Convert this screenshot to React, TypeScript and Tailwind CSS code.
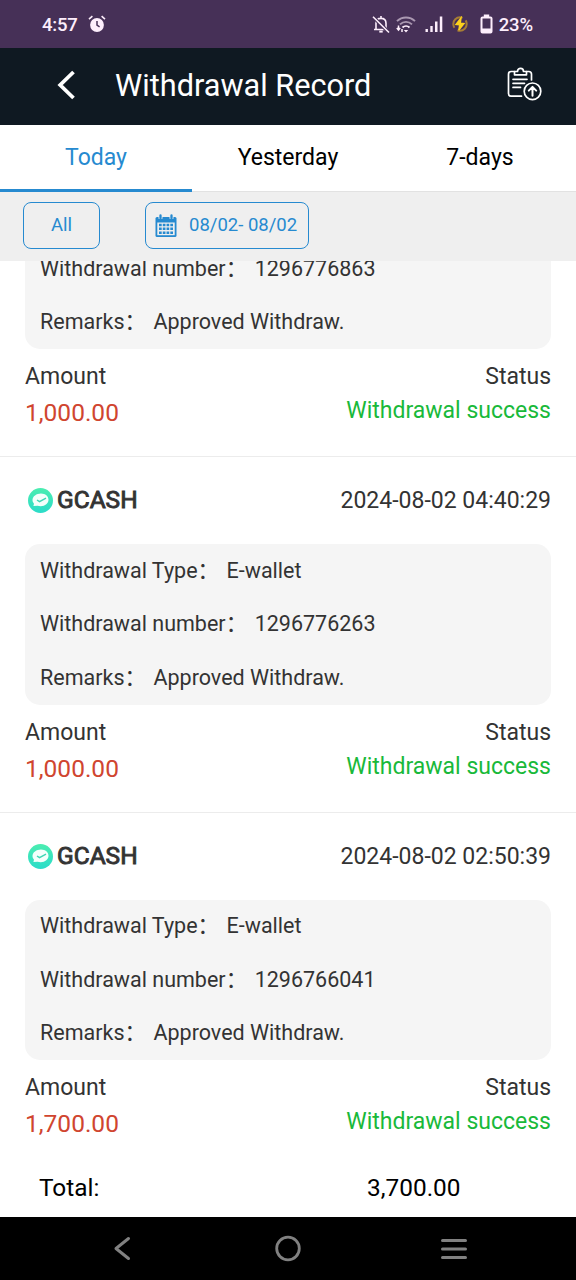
const records = [
	{
		id: "1296776863",
		amount: "1,000.00",
	},
	{
		id: "1296776263",
		date: "2024-08-02 04:40:29",
		amount: "1,000.00",
	},
	{
		id: "1296766041",
		date: "2024-08-02 02:50:39",
		amount: "1,700.00",
	},
];

function StatusBar() {
	return (
		<div className="flex items-center justify-between h-12 shrink-0 pl-[42px] pr-[43px] bg-[#463057] text-[#fdeefc]">
			<div className="flex items-center gap-[10px]">
				<span className="text-[18.5px] font-medium leading-6 -tracking-[0.2px] pt-px">4:57</span>
				<svg width="18" height="18" viewBox="0 0 18 18" fill="none">
					<circle cx="9" cy="10" r="6.9" fill="currentColor" />
					<path d="M1 4.2 4.4 1.2M17 4.2 13.6 1.2" stroke="currentColor" strokeWidth="1.6" />
					<path d="M9 6v4.2l2.6 1.6" stroke="#463057" strokeWidth="1.5" />
				</svg>
			</div>
			<div className="flex items-center">
				<svg width="18" height="19" viewBox="0 0 18 19" fill="none" stroke="currentColor" strokeWidth="1.6">
					<path d="M4 14V8.2C4 5.3 6 3.4 9 3.4s5 1.9 5 4.8V14M2 14.5h13.5M9 1v2.5" />
					<path d="M7.3 16.6h3.4" strokeWidth="2" />
					<path d="M1 1.8 17 17.5" stroke="#463057" strokeWidth="3.6" />
					<path d="M1 1.8 17 17.5" />
				</svg>
				<svg className="ml-[6px]" width="20" height="17" viewBox="0 0 20 17" fill="none" stroke="currentColor">
					<g strokeWidth="1.9" opacity="0.55">
						<path d="M1 5.2C6 .2 14 .2 19 5.2" />
						<path d="M4 8.4c3.5-3.3 8.5-3.3 12 0" />
					</g>
					<path d="M6.5 11.5c2-1.9 5-1.9 7 0" strokeWidth="1.9" />
					<path d="M10 16.5 7.8 14h4.4z" fill="currentColor" stroke="none" />
					<path d="M2.5 9.5v4.5M0.8 12l1.7 2 1.7-2M6 16v-3" strokeWidth="1.5" />
				</svg>
				<svg className="ml-[9px]" width="18" height="17" viewBox="0 0 18 17" fill="currentColor">
					<rect x="0.5" y="13" width="2.4" height="3" />
					<rect x="5.3" y="10" width="2.4" height="6" />
					<rect x="10" y="5.5" width="2.5" height="10.5" />
					<rect x="14.8" y="0.5" width="2.5" height="15.5" />
				</svg>
				<svg className="ml-[9px]" width="16" height="16" viewBox="0 0 16 16" fill="none">
					<circle cx="8" cy="8" r="6.7" stroke="#a67d35" strokeWidth="2" strokeDasharray="17 4" strokeDashoffset="4" />
					<path d="M9 2 4 8.5l3.7.3L6.8 14 12 7.5l-3.7-.4z" fill="#fdd21c" stroke="#fdd21c" strokeWidth="1.4" />
				</svg>
				<svg className="ml-[12px]" width="13" height="20" viewBox="0 0 13 20" fill="none">
					<path d="M3.8 0.5h5.4v2.5h-5.4z" fill="currentColor" />
					<rect x="1.5" y="3.5" width="10" height="15" rx="1" stroke="currentColor" strokeWidth="2" />
					<path d="M2 14.5h9v4h-9z" fill="currentColor" />
				</svg>
				<span className="ml-[6px] pt-px text-[18.5px] font-medium leading-6 -tracking-[0.1px]">23%</span>
			</div>
		</div>
	);
}

function Header() {
	return (
		<div className="flex items-center h-[77px] shrink-0 pl-[57px] pr-[34px] bg-[#0f1922] text-white">
			<svg className="mb-[3px]" width="18" height="30" viewBox="0 0 18 30" fill="none" stroke="currentColor" strokeWidth="3.8">
				<path d="M16.5 2 3.2 15l13.3 13" />
			</svg>
			<h1 className="ml-[40px] text-[30.7px] leading-9 -mt-px">Withdrawal Record</h1>
			<svg className="ml-auto mb-[6px]" width="35" height="34" viewBox="0 0 35 34" fill="none" stroke="currentColor" strokeWidth="1.7" strokeLinecap="round" strokeLinejoin="round">
				<path d="M7.5 4.5H4.2Q1.5 4.5 1.5 7.2V26.5Q1.5 29.2 4.2 29.2H14.5M19.5 4.5h2.3q2.7 0 2.7 2.7V13" />
				<path d="M7.5 7.8V4.5h3c0-4.2 6-4.2 6 0h3v3.3z" />
				<path d="M6 12.3h14M6 16.3h11.5M6 20.4h7.5" />
				<circle cx="25.5" cy="24.3" r="8.3" />
				<path d="M25.5 28.8v-8.5M21.8 23.6l3.7-3.7 3.7 3.7" strokeWidth="2" />
			</svg>
		</div>
	);
}

function CalendarIcon() {
	return (
		<svg width="22" height="24" viewBox="0 0 22 24">
			<path d="M2 3h18q1.500 0 1.500 1.500v17q0 1.500-1.500 1.500H2q-1.500 0-1.500-1.500V4.500q0-1.500 1.500-1.500z" fill="#268ad0" />
			<path d="M2.3 8.5h17.4v12.700H2.300z" fill="#efefef" />
			<path d="M5.5 0v4.800M16.500 0v4.800" stroke="#efefef" strokeWidth="4" />
			<path d="M5.5 1.500v2.500M16.500 1.500v2.500" stroke="#268ad0" strokeWidth="2.3" strokeLinecap="round" />
			<path
				d="M4 11h14M4 14.800h14M4 18.700h14"
				stroke="#268ad0"
				strokeWidth="2.5"
				strokeDasharray="2.7 1.07"
			/>
		</svg>
	);
}

function Row({ label, value }: { label: string; value: string }) {
	return (
		<div className="flex items-center h-[53.5px] text-[21.5px]">
			<span>{label}：</span>
			<span className="ml-[7.5px]">{value}</span>
		</div>
	);
}

// a record without a date is the one scrolled half under the filter bar
function Record({ id, date, amount }: { id: string; date?: string; amount: string }) {
	return (
		<div className="shrink-0 px-[25px] border-b border-[#ececec] last:border-b-0">
			{date && (
				<div className="flex items-center h-[87px]">
					<svg className="ml-[3px]" width="25" height="25" viewBox="0 0 25 25">
						<defs>
							<linearGradient id={`g${id}`} x1="0" y1="0" x2="0" y2="1">
								<stop offset="0" stopColor="#4bedb0" />
								<stop offset="1" stopColor="#2bdcc9" />
							</linearGradient>
						</defs>
						<circle cx="12.5" cy="12.5" r="12.5" fill={`url(#g${id})`} />
						<path d="M13 5.5c4.4 0 7.5 2.8 7.5 6.3s-3.3 6.4-7.8 6.4c-1.2 0-2.2-.1-3.1-.4l-4.2.2.6-2.3c-1-1.1-1.5-2.3-1.5-3.7 0-3.600 4-6.500 8.500-6.500z" fill="#f4fffb" />
						<path d="M9 12l2.5 1.7 6.5-3.5" fill="none" stroke="#3ed6b4" strokeWidth="1.4" />
					</svg>
					<span className="ml-[4px] text-[24.5px] [-webkit-text-stroke:0.9px_#333]">GCASH</span>
					<span className="ml-auto pt-[2px] text-[23px]">{date}</span>
				</div>
			)}
			<div className="pl-[15px] rounded-[15px] bg-[#f5f5f5]">
				{date && <Row label="Withdrawal Type" value="E-wallet" />}
				<Row label="Withdrawal number" value={id} />
				<Row label="Remarks" value="Approved Withdraw." />
			</div>
			<div className="flex justify-between h-[107px] pt-[10px] text-[23px] leading-[36px]">
				<div>
					<div>Amount</div>
					<div className="text-[24.5px] text-[#d0452f]">{amount}</div>
				</div>
				<div className="text-right">
					<div>Status</div>
					<div className="-mt-[2px] text-[#19b93a]">Withdrawal success</div>
				</div>
			</div>
		</div>
	);
}

export default function App() {
	return (
		<div className="flex flex-col w-[576px] h-[1280px] overflow-hidden bg-white font-['Roboto','Noto_Sans_CJK_SC',sans-serif] text-[#333]">
			<StatusBar />
			<Header />
			<div className="flex h-[67px] shrink-0 border-b border-[#e2e2e2] text-[23px] leading-8 text-black">
				<div className="flex-1 flex items-center justify-center h-[67px] pt-[2px] border-b-[3px] border-[#268ad0] text-[#268ad0]">
					Today
				</div>
				<div className="flex-1 flex items-center justify-center h-[64px] pt-[2px]">Yesterday</div>
				<div className="flex-1 flex items-center justify-center h-[64px] pt-[2px]">7-days</div>
			</div>
			<div className="flex items-center h-[69px] shrink-0 pl-[23px] pb-[2px] bg-[#efefef] text-[#268ad0] text-[18.5px] leading-7">
				<button type="button" className="w-[77px] h-[47px] pb-px rounded-[8px] border border-[#268ad0]">
					All
				</button>
				<button
					type="button"
					className="flex items-center w-[164px] h-[47px] ml-[45px] pl-[9px] rounded-[8px] border border-[#268ad0]"
				>
					<CalendarIcon />
					<span className="ml-[12px] pb-[2px] whitespace-nowrap">08/02- 08/02</span>
				</button>
			</div>
			<div className="flex flex-col justify-end h-[896.5px] shrink-0 overflow-hidden">
				<div className="flex flex-col shrink-0 -mb-[9.6px]">
					{records.map((r) => (
						<Record key={r.id} id={r.id} date={r.date} amount={r.amount} />
					))}
				</div>
			</div>
			<div className="flex items-center h-[59.5px] shrink-0 pt-[2px] pl-[39px] bg-white text-[24.4px] text-black">
				<span className="w-[328px]">Total:</span>
				<span>3,700.00</span>
			</div>
			<div className="flex items-center justify-around h-[63px] shrink-0 pl-[39px] pr-[39px] bg-black text-[#818181]">
				<svg width="26" height="28" viewBox="0 0 26 28" fill="none" stroke="currentColor" strokeWidth="3" strokeLinecap="round" strokeLinejoin="round">
					<path d="M19.5 3.5 7 13.5 19.5 23.5" />
				</svg>
				<svg width="26" height="28" viewBox="0 0 26 28" fill="none" stroke="currentColor" strokeWidth="2.8">
					<circle cx="13" cy="13.5" r="11.3" />
				</svg>
				<svg width="26" height="28" viewBox="0 0 26 28" fill="none" stroke="currentColor" strokeWidth="3" strokeLinecap="round">
					<path d="M1.500 5.500h23M1.500 14h23M1.500 22.500h23" />
				</svg>
			</div>
		</div>
	);
}
